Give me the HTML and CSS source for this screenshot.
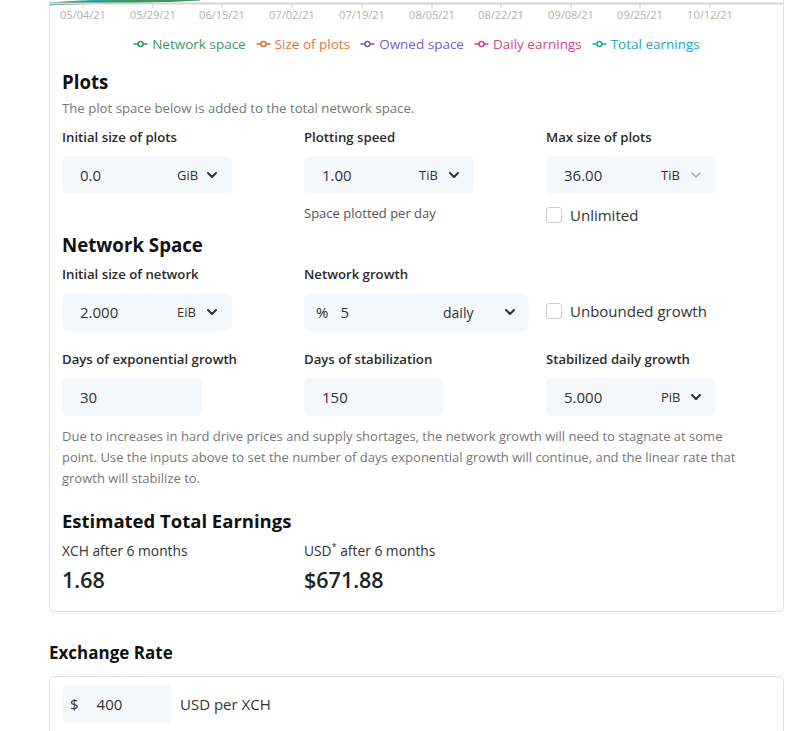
FILE: index.html
```html
<!DOCTYPE html>
<html lang="en">
<head>
<meta charset="utf-8">
<title>Chia calculator</title>
<link rel="stylesheet" href="styles.css">
</head>
<body>
<div class="page">
  <section class="card calc">
    <div class="chart">
      <svg class="axis" viewBox="0 0 733 30" xmlns="http://www.w3.org/2000/svg">
        <polyline class="c-teal" points="0,4 30,2 70,0.5 100,-1"/>
        <polyline class="c-green" points="8,3.5 60,2 120,0.5 150,-1"/>
        <line class="ax" x1="0" y1="3.5" x2="733" y2="3.5"/>
        <g class="ticks">
          <line x1="33" y1="3" x2="33" y2="8"/>
          <line x1="103" y1="3" x2="103" y2="8"/>
          <line x1="172" y1="3" x2="172" y2="8"/>
          <line x1="242" y1="3" x2="242" y2="8"/>
          <line x1="312" y1="3" x2="312" y2="8"/>
          <line x1="382" y1="3" x2="382" y2="8"/>
          <line x1="451" y1="3" x2="451" y2="8"/>
          <line x1="521" y1="3" x2="521" y2="8"/>
          <line x1="590" y1="3" x2="590" y2="8"/>
          <line x1="660" y1="3" x2="660" y2="8"/>
        </g>
        <g class="tl">
          <text x="33" y="19">05/04/21</text>
          <text x="103" y="19">05/29/21</text>
          <text x="172" y="19">06/15/21</text>
          <text x="242" y="19">07/02/21</text>
          <text x="312" y="19">07/19/21</text>
          <text x="382" y="19">08/05/21</text>
          <text x="451" y="19">08/22/21</text>
          <text x="521" y="19">09/08/21</text>
          <text x="590" y="19">09/25/21</text>
          <text x="660" y="19">10/12/21</text>
        </g>
      </svg>
      <ul class="legend">
        <li class="green"><svg class="mk" viewBox="0 0 14 8"><line x1="0" y1="4" x2="14" y2="4"/><circle cx="7" cy="4" r="2.5"/></svg>Network space</li>
        <li class="orange"><svg class="mk" viewBox="0 0 14 8"><line x1="0" y1="4" x2="14" y2="4"/><circle cx="7" cy="4" r="2.5"/></svg>Size of plots</li>
        <li class="purple"><svg class="mk" viewBox="0 0 14 8"><line x1="0" y1="4" x2="14" y2="4"/><circle cx="7" cy="4" r="2.5"/></svg>Owned space</li>
        <li class="pink"><svg class="mk" viewBox="0 0 14 8"><line x1="0" y1="4" x2="14" y2="4"/><circle cx="7" cy="4" r="2.5"/></svg>Daily earnings</li>
        <li class="teal"><svg class="mk" viewBox="0 0 14 8"><line x1="0" y1="4" x2="14" y2="4"/><circle cx="7" cy="4" r="2.5"/></svg>Total earnings</li>
      </ul>
    </div>

    <div class="body">
      <h2>Plots</h2>
      <p class="sub">The plot space below is added to the total network space.</p>
      <div class="grid g-plots">
        <div class="field">
          <span class="label">Initial size of plots</span>
          <div class="input w170"><span class="val">0.0</span><span class="unit">GiB<svg class="chev" viewBox="0 0 10 6"><path d="M1 1 L5 5 L9 1"/></svg></span></div>
        </div>
        <div class="field">
          <span class="label">Plotting speed</span>
          <div class="input w170"><span class="val">1.00</span><span class="unit">TiB<svg class="chev" viewBox="0 0 10 6"><path d="M1 1 L5 5 L9 1"/></svg></span></div>
          <p class="help">Space plotted per day</p>
        </div>
        <div class="field">
          <span class="label">Max size of plots</span>
          <div class="input w170"><span class="val">36.00</span><span class="unit">TiB<svg class="chev dim" viewBox="0 0 10 6"><path d="M1 1 L5 5 L9 1"/></svg></span></div>
          <div class="check"><span class="box"></span>Unlimited</div>
        </div>
      </div>

      <h2 class="h-net">Network Space</h2>
      <div class="grid g-net1">
        <div class="field">
          <span class="label">Initial size of network</span>
          <div class="input w170"><span class="val">2.000</span><span class="unit">EiB<svg class="chev" viewBox="0 0 10 6"><path d="M1 1 L5 5 L9 1"/></svg></span></div>
        </div>
        <div class="field">
          <span class="label">Network growth</span>
          <div class="input w225"><span class="pct">%</span><span class="val pv">5</span><span class="period">daily<svg class="chev" viewBox="0 0 10 6"><path d="M1 1 L5 5 L9 1"/></svg></span></div>
        </div>
        <div class="field">
          <div class="check tall"><span class="box"></span>Unbounded growth</div>
        </div>
      </div>
      <div class="grid g-net2">
        <div class="field">
          <span class="label">Days of exponential growth</span>
          <div class="input w140"><span class="val">30</span></div>
        </div>
        <div class="field">
          <span class="label">Days of stabilization</span>
          <div class="input w140"><span class="val">150</span></div>
        </div>
        <div class="field">
          <span class="label">Stabilized daily growth</span>
          <div class="input w170"><span class="val">5.000</span><span class="unit">PiB<svg class="chev" viewBox="0 0 10 6"><path d="M1 1 L5 5 L9 1"/></svg></span></div>
        </div>
      </div>
      <p class="note">Due to increases in hard drive prices and supply shortages, the network growth will need to stagnate at some point. Use the inputs above to set the number of days exponential growth will continue, and the linear rate that growth will stabilize to.</p>

      <h2 class="h-est">Estimated Total Earnings</h2>
      <div class="grid g-est">
        <div class="field">
          <span class="elabel">XCH after 6 months</span>
          <div class="evalue">1.68</div>
        </div>
        <div class="field">
          <span class="elabel">USD<sup>*</sup> after 6 months</span>
          <div class="evalue">$671.88</div>
        </div>
      </div>
    </div>
  </section>

  <h3 class="h-ex">Exchange Rate</h3>
  <section class="card ex-card">
    <div class="exrow">
      <div class="input w110 ex-input"><span class="cur">$</span><span class="exval">400</span></div>
      <span class="exlabel">USD per XCH</span>
    </div>
  </section>
</div>
</body>
</html>
```

FILE: styles.css
```css
* { box-sizing: border-box; margin: 0; padding: 0; }

body {
  font-family: "Open Sans", "Noto Sans", sans-serif;
  color: #333;
  background: #fff;
}

.page {
  margin-left: 49px;
  width: 735px;
}

.card {
  border: 1px solid #e1e1e1;
  border-radius: 6px;
}

.calc {
  border-top: none;
  border-radius: 0 0 6px 6px;
}

/* chart remnant */
.axis {
  display: block;
  width: 733px;
  height: 30px;
  overflow: visible;
}
.axis .ax { stroke: #d4d4d4; stroke-width: 2; }
.axis .ticks line { stroke: #cfcfcf; stroke-width: 1; }
.axis .tl text {
  font-family: "Open Sans", sans-serif;
  font-size: 11px;
  fill: #b0b0b0;
  text-anchor: middle;
}
.c-teal { fill: none; stroke: #25a9c4; stroke-width: 3; }
.c-green { fill: none; stroke: #3b9a5d; stroke-width: 3; }

.legend {
  list-style: none;
  display: flex;
  justify-content: center;
  align-items: center;
  gap: 10px;
  height: 20px;
  margin: 4px 0 16px;
  font-size: 13.5px;
  line-height: 20px;
}
.legend li { display: flex; align-items: center; gap: 4px; }
.mk { width: 15px; height: 8px; stroke: currentColor; stroke-width: 1.6; fill: #fff; }
.green { color: #3b9a5d; }
.orange { color: #e0743b; }
.purple { color: #7a5cc7; }
.pink { color: #d2478c; }
.teal { color: #22a8c4; }

/* body of the calculator */
.body { padding: 0 12px 17px; }

h2 {
  font-size: 18.7px;
  line-height: 24px;
  font-weight: 700;
  color: #111;
}

.sub {
  font-size: 13.2px;
  line-height: 18px;
  color: #777;
  margin-top: 5px;
}

.grid {
  display: grid;
  grid-template-columns: 242px 242px 1fr;
  align-items: start;
}
.g-plots { margin-top: 11px; }
.h-net { margin-top: 7px; }
.g-net1 { margin-top: 8px; }
.g-net2 { margin-top: 19px; }

.label {
  display: block;
  font-size: 13.2px;
  line-height: 18px;
  font-weight: 600;
  color: #2b2b2b;
}

.input {
  display: flex;
  align-items: center;
  height: 38px;
  margin-top: 10px;
  background: #f5f8fa;
  border-radius: 6px;
  font-size: 15px;
  color: #333;
}
.w170 { width: 170px; }
.w140 { width: 140px; }
.w225 { width: 225px; }
.w110 { width: 110px; }

.val { flex: 1; padding-left: 18px; }

.unit {
  width: 55px;
  display: flex;
  align-items: center;
  justify-content: space-between;
  padding-right: 15px;
  font-size: 13px;
}

.pct { padding-left: 12px; }
.pv { padding-left: 12px; }

.period {
  width: 86px;
  display: flex;
  align-items: center;
  justify-content: space-between;
  padding-right: 14px;
  font-size: 14px;
}

.chev {
  width: 10px;
  height: 6px;
  fill: none;
  stroke: #333;
  stroke-width: 2;
  stroke-linecap: round;
  stroke-linejoin: round;
}
.chev.dim { stroke: #a8a8a8; stroke-width: 1.5; }

.help {
  font-size: 13px;
  line-height: 18px;
  color: #555;
  margin-top: 10px;
}

.check {
  display: flex;
  align-items: center;
  gap: 8px;
  height: 22px;
  margin-top: 10px;
  font-size: 15px;
  color: #333;
}
.check.tall { margin-top: 28px; height: 36px; }

.box {
  width: 16px;
  height: 16px;
  border: 1.5px solid #cfcfcf;
  border-radius: 3px;
  background: #fff;
}

.note {
  max-width: 688px;
  margin-top: 10px;
  font-size: 13px;
  line-height: 21px;
  color: #777;
}

.h-est { margin-top: 20px; font-size: 18.5px; }
.g-est { margin-top: 9px; }

.elabel {
  display: block;
  font-size: 13.8px;
  line-height: 18px;
  color: #333;
}
.elabel sup { font-size: 9px; vertical-align: 6px; line-height: 0; }

.evalue {
  margin-top: 6px;
  font-size: 21.5px;
  line-height: 28px;
  font-weight: 600;
  color: #222;
}

/* exchange rate */
.h-ex {
  margin-top: 30px;
  font-size: 17px;
  line-height: 22px;
  font-weight: 700;
  color: #111;
}

.ex-card {
  margin-top: 12px;
  padding: 8px 12px 24px;
}

.exrow { display: flex; align-items: center; gap: 8px; }
.ex-input { margin-top: 0; }
.cur { padding-left: 8px; }
.exval { padding-left: 18px; }
.exlabel { font-size: 15px; color: #333; }
```
